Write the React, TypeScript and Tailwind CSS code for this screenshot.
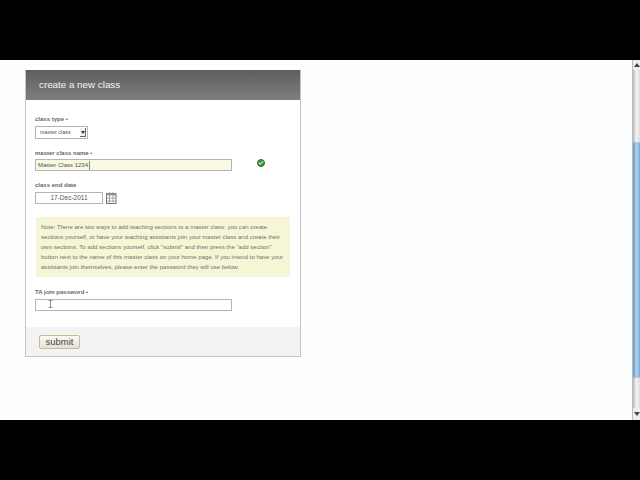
import { Check } from 'lucide-react';

function Label({ text, required }: { text: string; required?: boolean }) {
  return (
    <div className="h-[10px] text-[6px] leading-[10px] font-bold text-[#666]">
      {text}
      {required && <span className="text-[#c33]"> •</span>}
    </div>
  );
}

function CalendarIcon() {
  return (
    <svg width="11" height="12" viewBox="0 0 11 12" className="ml-[3px]">
      <rect x="0.5" y="1.5" width="9.5" height="10" fill="#fff" stroke="#777" />
      <rect x="0.5" y="1.5" width="9.5" height="2" fill="#999" />
      <path d="M3.5 0v12M7 0v12M1 6h9M1 9h9" stroke="#888" strokeWidth="0.7" />
    </svg>
  );
}

function Scrollbar() {
  return (
    <div className="w-[8px] flex flex-col bg-[#d8d8d8] border-l border-[#bbb]">
      <div className="h-[10px] flex items-center justify-center bg-[#eee]">
        <div className="w-0 h-0 border-x-[3px] border-x-transparent border-b-[4px] border-b-[#444]" />
      </div>
      <div className="h-[72px] bg-[linear-gradient(to_right,#bbb,#f4f4f4,#ddd)]" />
      <div className="h-[236px] bg-[linear-gradient(to_right,#5f93c4,#b4d4ee,#79a9d6)] rounded-[2px]" />
      <div className="flex-1 bg-[linear-gradient(to_right,#bbb,#f4f4f4,#ddd)]" />
      <div className="h-[12px] flex items-center justify-center bg-[#eee]">
        <div className="w-0 h-0 border-x-[3px] border-x-transparent border-t-[4px] border-t-[#444]" />
      </div>
    </div>
  );
}

export default function App() {
  return (
    <div className="w-[640px] h-[480px] flex flex-col bg-black font-['Liberation_Sans',Arial,sans-serif] overflow-hidden">
      <div className="h-[60px] shrink-0 bg-black" />
      <div className="h-[360px] shrink-0 flex bg-[#fdfeff]">
        <div className="flex-1 pl-[25px] pt-[10px]">
          <div className="w-[276px] h-[287px] flex flex-col bg-white border border-t-0 border-[#c4c4c4]">
            <div className="h-[30px] shrink-0 pl-[13px] flex items-center bg-[linear-gradient(to_bottom,#5e5e5e,#7e7e7e)] text-[9.8px] text-[#f4f4f4]">
              create a new class
            </div>
            <div className="flex-1 pl-[9px] pr-[9px] pt-[14px]">
              <Label text="class type" required />
              <div className="mt-[2px] w-[53px] h-[13px] flex items-center justify-between pl-[4px] pr-[1px] border border-[#b5b5b5] bg-white text-[5.5px] text-[#555]">
                <span>master class</span>
                <span className="w-[6px] h-[9px] flex items-center justify-center border-r border-b border-[#666] bg-[#f0f0f0]">
                  <span className="w-0 h-0 border-x-[2px] border-x-transparent border-t-[3px] border-t-[#333]" />
                </span>
              </div>
              <div className="mt-[9px]">
                <Label text="master class name" required />
              </div>
              <div className="mt-[1px] flex items-center">
                <div className="w-[197px] h-[12px] flex items-center pl-[2px] border border-[#b5b5b5] bg-[#f8f8e3] text-[6px] text-[#555]">
                  Master Class 1234
                  <span className="ml-[0.5px] w-px h-[9px] bg-[#888]" />
                </div>
                <div className="ml-[25px] -mt-[4px] w-[8px] h-[8px] rounded-full bg-[#3f9a3f] border border-[#2d6e2d] flex items-center justify-center">
                  <Check size={6} strokeWidth={4} color="#fff" />
                </div>
              </div>
              <div className="mt-[9px]">
                <Label text="class end date" />
              </div>
              <div className="mt-[2px] flex items-center">
                <div className="w-[68px] h-[12px] flex items-center justify-center border border-[#b5b5b5] text-[6.5px] text-[#555]">
                  17-Dec-2011
                </div>
                <CalendarIcon />
              </div>
              <div className="mt-[13px] ml-px w-[254px] h-[60px] px-[5px] py-[5px] bg-[#f6f6d6] text-[6.05px] leading-[10px] text-[#707070] whitespace-nowrap">
                <div>Note: There are two ways to add teaching sections to a master class: you can create</div>
                <div>sections yourself, or have your teaching assistants join your master class and create their</div>
                <div>own sections. To add sections yourself, click "submit" and then press the "add section"</div>
                <div>button next to the name of this master class on your home page. If you intend to have your</div>
                <div>assistants join themselves, please enter the password they will use below.</div>
              </div>
              <div className="mt-[10px]">
                <Label text="TA join password" required />
              </div>
              <div className="relative mt-[2px] w-[197px] h-[12px] border border-[#b5b5b5] bg-white">
                <svg width="5" height="8" viewBox="0 0 5 8" className="absolute left-[12px] top-0">
                  <path d="M0.5 0.5h4M0.5 7.5h4M2.5 0.5v7" stroke="#777" strokeWidth="0.8" fill="none" />
                </svg>
              </div>
            </div>
            <div className="h-[29px] shrink-0 pl-[13px] pt-[8px] bg-[#f3f3f3]">
              <div className="w-[41px] h-[14px] flex items-center justify-center rounded-[2px] border border-[#c4bb95] bg-[linear-gradient(to_bottom,#fbfaf2,#e4e2d6)] text-[9.5px] text-[#444]">
                submit
              </div>
            </div>
          </div>
        </div>
        <Scrollbar />
      </div>
      <div className="flex-1 bg-black" />
    </div>
  );
}
